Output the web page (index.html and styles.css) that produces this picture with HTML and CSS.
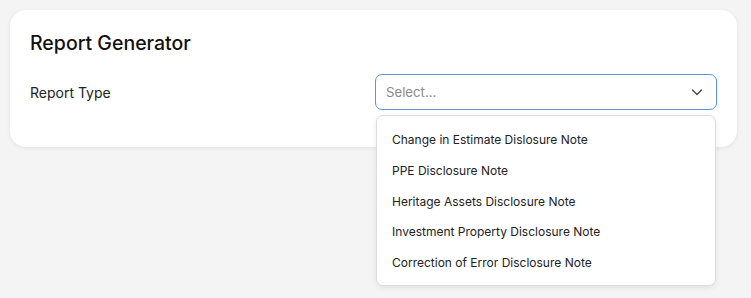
FILE: index.html
```html
<!DOCTYPE html>
<html>
<head>
<meta charset="utf-8">
<link rel="stylesheet" href="styles.css">
</head>
<body>
<div class="page">
  <div class="card">
    <h1 class="title">Report Generator</h1>
    <div class="row">
      <label class="label">Report Type</label>
      <div class="select-wrap">
        <div class="select">
          <span class="placeholder">Select...</span>
          <svg class="chev" width="14" height="14" viewBox="0 0 14 14"><path d="M2.5 5 L7 9.5 L11.5 5" fill="none" stroke="#555" stroke-width="1.6" stroke-linecap="round" stroke-linejoin="round"/></svg>
        </div>
        <ul class="menu">
          <li>Change in Estimate Dislosure Note</li>
          <li>PPE Disclosure Note</li>
          <li>Heritage Assets Disclosure Note</li>
          <li>Investment Property Disclosure Note</li>
          <li>Correction of Error Disclosure Note</li>
        </ul>
      </div>
    </div>
  </div>
</div>
</body>
</html>
```

FILE: styles.css
```css
html, body {
  margin: 0;
  padding: 0;
  background: #f4f4f4;
  font-family: Inter, "Noto Sans", sans-serif;
}
body {
  min-height: 100vh;
}
.page {
  padding: 10px 14px 10px 10px;
}
.card {
  background: #fff;
  border-radius: 16px;
  padding: 20px 20px 37px 20px;
  box-shadow: 0 1px 4px rgba(0,0,0,0.08);
}
.title {
  margin: 0 0 18px 0;
  font-size: 19.5px;
  line-height: 26px;
  font-weight: 500;
  color: #111;
}
.row {
  display: grid;
  grid-template-columns: 345px 1fr;
  align-items: center;
}
.label {
  font-size: 14px;
  color: #222;
}
.select-wrap {
  position: relative;
}
.select {
  height: 36px;
  box-sizing: border-box;
  border: 1px solid #5b93dc;
  border-radius: 7px;
  display: flex;
  align-items: center;
  justify-content: space-between;
  padding: 0 12px 0 10px;
}
.placeholder {
  font-size: 13.2px;
  color: #8a8a8a;
}
.chev {
  display: block;
}
.menu {
  position: absolute;
  top: 41px;
  left: 1px;
  right: 1px;
  margin: 0;
  padding: 9px 0 6px 0;
  list-style: none;
  background: #fff;
  border: 1px solid #dcdcdc;
  border-radius: 7px;
  box-shadow: 0 2px 6px rgba(0,0,0,0.08);
}
.menu li {
  height: 30.8px;
  line-height: 30.8px;
  padding: 0 15px;
  font-size: 12px;
  color: #222;
}
```
